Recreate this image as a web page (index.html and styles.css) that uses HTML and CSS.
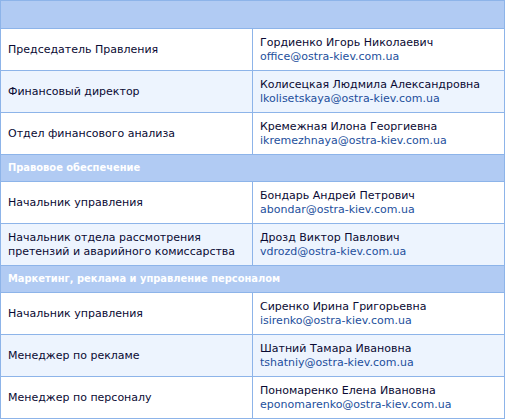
FILE: index.html
```html
<!DOCTYPE html>
<html lang="ru">
<head>
<meta charset="utf-8">
<title>Контакты</title>
<link rel="stylesheet" href="styles.css">
</head>
<body>
<table class="staff">
  <tr class="section top"><td colspan="2"></td></tr>
  <tr class="odd"><td class="pos">Председатель Правления</td><td class="who">Гордиенко Игорь Николаевич<br><a href="#">office@ostra-kiev.com.ua</a></td></tr>
  <tr class="even"><td class="pos">Финансовый директор</td><td class="who">Колисецкая Людмила Александровна<br><a href="#">lkolisetskaya@ostra-kiev.com.ua</a></td></tr>
  <tr class="odd"><td class="pos">Отдел финансового анализа</td><td class="who">Кремежная Илона Георгиевна<br><a href="#">ikremezhnaya@ostra-kiev.com.ua</a></td></tr>
  <tr class="section"><td colspan="2">Правовое обеспечение</td></tr>
  <tr class="odd"><td class="pos">Начальник управления</td><td class="who">Бондарь Андрей Петрович<br><a href="#">abondar@ostra-kiev.com.ua</a></td></tr>
  <tr class="even"><td class="pos">Начальник отдела рассмотрения<br>претензий и аварийного комиссарства</td><td class="who">Дрозд Виктор Павлович<br><a href="#">vdrozd@ostra-kiev.com.ua</a></td></tr>
  <tr class="section"><td colspan="2">Маркетинг, реклама и управление персоналом</td></tr>
  <tr class="odd"><td class="pos">Начальник управления</td><td class="who">Сиренко Ирина Григорьевна<br><a href="#">isirenko@ostra-kiev.com.ua</a></td></tr>
  <tr class="even"><td class="pos">Менеджер по рекламе</td><td class="who">Шатний Тамара Ивановна<br><a href="#">tshatniy@ostra-kiev.com.ua</a></td></tr>
  <tr class="odd"><td class="pos">Менеджер по персоналу</td><td class="who">Пономаренко Елена Ивановна<br><a href="#">eponomarenko@ostra-kiev.com.ua</a></td></tr>
</table>
</body>
</html>
```

FILE: styles.css
```css
html, body {
  margin: 0;
  padding: 0;
  background: #ffffff;
}
.staff {
  width: 505px;
  border-collapse: collapse;
  font-family: "DejaVu Sans", Verdana, sans-serif;
  font-size: 11px;
  color: #0a0a33;
  table-layout: fixed;
}
.staff td {
  border: 1px solid #8db4e9;
  padding: 0 7px;
  height: 41px;
  line-height: 14px;
  vertical-align: middle;
  box-sizing: border-box;
}
.staff td.pos {
  width: 252px;
}
.staff .section td {
  background: #b1cbf3;
  height: 27px;
  color: #ffffff;
  font-family: "DejaVu Sans Condensed", "DejaVu Sans", sans-serif;
  font-weight: bold;
}
.staff .section.top td {
  height: 28px;
}
.staff .odd td,
.staff .even td {
  height: 42px;
}
.staff .even td {
  background: #edf4fe;
}
.staff a {
  color: #1d4f9c;
  text-decoration: none;
}
```
